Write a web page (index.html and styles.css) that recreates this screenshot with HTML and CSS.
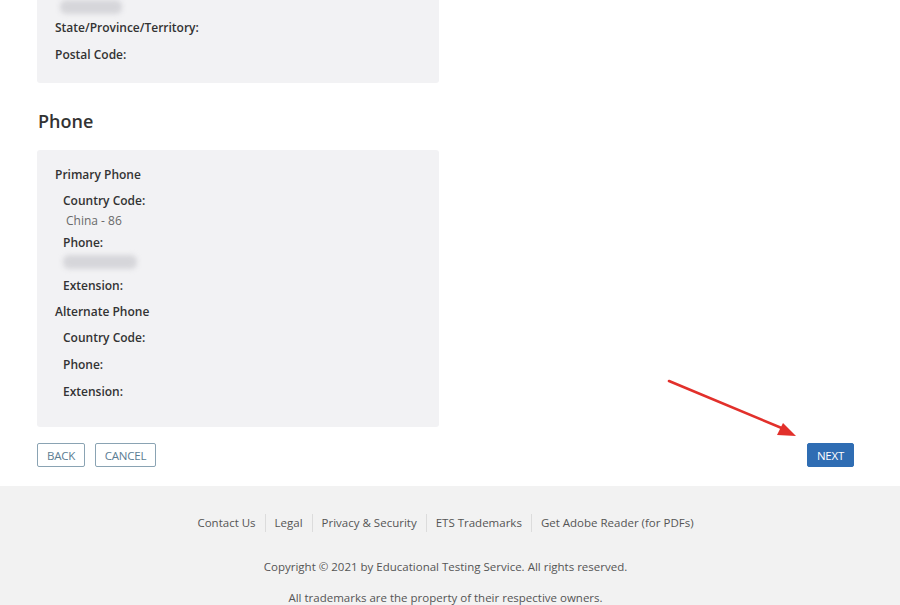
FILE: index.html
```html
<!DOCTYPE html>
<html>
<head>
<meta charset="utf-8">
<link rel="stylesheet" href="styles.css">
</head>
<body>
<main class="main">
  <section class="card card-address">
    <div class="blur blur-top"></div>
    <div class="field"><div class="label">State/Province/Territory:</div></div>
    <div class="field"><div class="label">Postal Code:</div></div>
  </section>

  <h2 class="heading">Phone</h2>

  <section class="card card-phone">
    <div class="group-title">Primary Phone</div>
    <div class="group group-first">
      <div class="field"><div class="label">Country Code:</div><div class="value">China - 86</div></div>
      <div class="field"><div class="label">Phone:</div><div class="value value-blur"><div class="blur blur-phone"></div></div></div>
      <div class="field"><div class="label">Extension:</div></div>
    </div>
    <div class="group-title">Alternate Phone</div>
    <div class="group">
      <div class="field"><div class="label">Country Code:</div></div>
      <div class="field"><div class="label">Phone:</div></div>
      <div class="field"><div class="label">Extension:</div></div>
    </div>
  </section>

  <div class="actions">
    <div class="actions-left">
      <button class="btn btn-outline btn-back">BACK</button>
      <button class="btn btn-outline btn-cancel">CANCEL</button>
    </div>
    <button class="btn btn-primary">NEXT</button>
  </div>
</main>

<footer class="footer">
  <nav class="footer-links">
    <a>Contact Us</a><a>Legal</a><a>Privacy &amp; Security</a><a>ETS Trademarks</a><a>Get Adobe Reader (for PDFs)</a>
  </nav>
  <p class="footer-copy">Copyright © 2021 by Educational Testing Service. All rights reserved.</p>
  <p class="footer-tm">All trademarks are the property of their respective owners.</p>
</footer>

<svg class="arrow" width="900" height="605" viewBox="0 0 900 605">
  <path d="M669 381 L784 429" stroke="#e2302b" stroke-width="2.6" stroke-linecap="round" fill="none"/>
  <path d="M796 436 L777 435 L783 423 Z" fill="#e2302b"/>
</svg>
</body>
</html>
```

FILE: styles.css
```css
* { box-sizing: border-box; }
html, body { margin: 0; padding: 0; }
body {
  width: 900px;
  height: 605px;
  overflow: hidden;
  background: #fff;
  font-family: "Open Sans", "Liberation Sans", sans-serif;
  color: #333;
  position: relative;
}
.main {
  padding: 0 46px 0 37px;
}
.card {
  width: 402px;
  background: #f2f2f4;
  border-radius: 3px;
  padding: 0 18px;
}
.card-address {
  padding-top: 0;
  padding-bottom: 10px;
  border-radius: 0 0 3px 3px;
}
.blur {
  background: #d6d6da;
  border-radius: 6px;
  filter: blur(2.5px);
}
.blur-top {
  width: 62px;
  height: 14px;
  margin: 0 0 5px 5px;
}
.blur-phone {
  width: 74px;
  height: 14px;
  margin-top: 3px;
}
.field {
  padding-bottom: 9px;
}
.group-first .field:last-child {
  padding-bottom: 8px;
}
.label {
  font-size: 12px;
  line-height: 18px;
  font-weight: 600;
  color: #333;
}
.value {
  font-size: 12px;
  line-height: 18px;
  color: #6a6a6a;
  padding-left: 3px;
  margin-top: 2px;
  margin-bottom: -5px;
}
.value-blur {
  padding-left: 0;
  margin-bottom: -1px;
}
.heading {
  margin: 26px 0 0 1px;
  font-size: 18px;
  line-height: 24px;
  font-weight: 600;
  color: #333;
}
.card-phone {
  margin-top: 17px;
  padding-top: 16px;
  padding-bottom: 17px;
}
.group-title {
  font-size: 12px;
  line-height: 18px;
  font-weight: 600;
  color: #333;
  padding-bottom: 8px;
}
.group {
  padding-left: 8px;
}
.actions {
  display: flex;
  justify-content: space-between;
  margin-top: 16px;
}
.actions-left {
  display: flex;
  gap: 10px;
}
.btn {
  height: 24px;
  font-family: "Open Sans", "Liberation Sans", sans-serif;
  font-size: 11.5px;
  padding: 0;
  border-radius: 2px;
  letter-spacing: -0.2px;
}
.btn-outline {
  background: #fff;
  border: 1px solid #8aa3b3;
  color: #5b7d93;
}
.btn-back { width: 48px; }
.btn-cancel { width: 61px; }
.btn-primary {
  width: 47px;
  background: #2f6db3;
  border: 1px solid #2f6db3;
  color: #fff;
}
.footer {
  margin-top: 19px;
  background: #f2f2f2;
  height: 200px;
  padding: 28px 9px 0 0;
  text-align: center;
  font-size: 11.5px;
  color: #555;
}
.footer-links {
  display: flex;
  justify-content: center;
  line-height: 18px;
}
.footer-links a {
  padding: 0 9px;
  border-left: 1px solid #dcdcdc;
}
.footer-links a:first-child { border-left: none; }
.footer-copy {
  margin: 26px 0 0;
  line-height: 18px;
}
.footer-tm {
  margin: 13px 0 0;
  line-height: 18px;
}
.arrow {
  position: absolute;
  left: 0;
  top: 0;
  pointer-events: none;
}
```
